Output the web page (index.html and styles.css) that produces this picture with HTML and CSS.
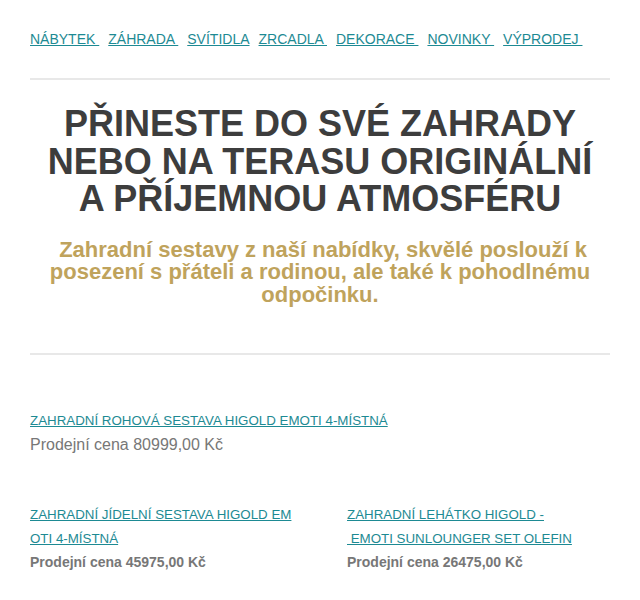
FILE: index.html
```html
<!DOCTYPE html>
<html lang="cs">
<head>
<meta charset="utf-8">
<title>Zahrada</title>
<link rel="stylesheet" href="styles.css">
</head>
<body>
<div class="page">
  <nav class="menu">
    <a href="#">NÁBYTEK </a>
    <a href="#">ZÁHRADA </a>
    <a href="#">SVÍTIDLA</a>
    <a href="#">ZRCADLA </a>
    <a href="#">DEKORACE </a>
    <a href="#">NOVINKY </a>
    <a href="#">VÝPRODEJ </a>
  </nav>
  <hr class="rule">
  <section class="hero">
    <h1 class="title">PŘINESTE DO SVÉ ZAHRADY NEBO NA TERASU ORIGINÁLNÍ A PŘÍJEMNOU ATMOSFÉRU</h1>
    <p class="lead">&nbsp;Zahradní sestavy z naší nabídky, skvělé poslouží k posezení s přáteli a rodinou, ale také k pohodlnému odpočinku.</p>
  </section>
  <hr class="rule">
  <section class="featured">
    <a class="prod-link" href="#">ZAHRADNÍ ROHOVÁ SESTAVA HIGOLD EMOTI 4-MÍSTNÁ</a>
    <div class="price-big">Prodejní cena 80999,00 Kč</div>
  </section>
  <section class="grid">
    <div class="item">
      <a class="prod-link wrap" href="#">ZAHRADNÍ JÍDELNÍ SESTAVA HIGOLD EMOTI 4-MÍSTNÁ</a>
      <div class="price">Prodejní cena 45975,00 Kč</div>
    </div>
    <div class="item">
      <a class="prod-link wrap" href="#">ZAHRADNÍ LEHÁTKO HIGOLD - <br>&nbsp;EMOTI SUNLOUNGER SET OLEFIN</a>
      <div class="price">Prodejní cena 26475,00 Kč</div>
    </div>
  </section>
</div>
</body>
</html>
```
FILE: styles.css
```css
html, body {
  margin: 0;
  padding: 0;
  background: #fff;
}
.page {
  padding: 30px 30px 0 30px;
  font-family: "Liberation Sans", Arial, sans-serif;
}
.menu {
  display: flex;
  gap: 0 9px;
  font-size: 14px;
  line-height: 18px;
}
.menu a {
  color: #1d8a93;
  white-space: pre;
}
.rule {
  border: 0;
  height: 2px;
  background: #e8e8e8;
  margin: 30px 0 0 0;
}
.hero {
  padding: 25px 0 0 0;
}
.title {
  margin: 0;
  padding: 0 12px;
  text-align: center;
  font-size: 36px;
  line-height: 37.5px;
  font-weight: bold;
  color: #3d3d3d;
}
.lead {
  margin: 21px 0 0 0;
  text-align: center;
  font-size: 22px;
  line-height: 22.5px;
  font-weight: bold;
  color: #bfa35c;
}
.hero + .rule {
  margin-top: 47px;
}
.featured {
  padding-top: 54px;
}
.prod-link {
  color: #1d8a93;
  font-size: 13.33px;
  line-height: 24px;
}
.price-big {
  font-size: 16px;
  line-height: 24px;
  color: #777;
}
.grid {
  display: grid;
  grid-template-columns: 266px 264px;
  column-gap: 51px;
  padding-top: 46px;
}
.wrap {
  display: block;
  line-height: 23.5px;
  word-break: break-all;
}
.price {
  font-size: 14px;
  font-weight: bold;
  color: #777;
  line-height: 24px;
}
```
